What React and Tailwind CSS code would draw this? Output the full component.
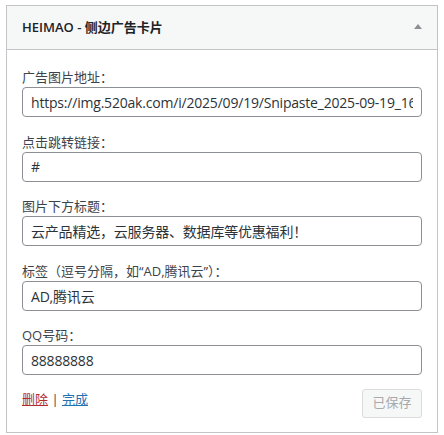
import React from "react";

const fontStack = {
  fontFamily: '"Open Sans", "Noto Sans CJK SC", sans-serif',
};

const fields = [
  { label: "广告图片地址：", value: "https://img.520ak.com/i/2025/09/19/Snipaste_2025-09-19_16-46-05.png" },
  { label: "点击跳转链接：", value: "#" },
  { label: "图片下方标题：", value: "云产品精选，云服务器、数据库等优惠福利！" },
  { label: "标签（逗号分隔，如“AD,腾讯云”）：", value: "AD,腾讯云" },
  { label: "QQ号码：", value: "88888888" },
];

const Field = ({ label, value }) => (
  <div className="flex flex-col">
    <label className="text-[13px] leading-[18px] text-[#3c434a]">{label}</label>
    <input
      type="text"
      defaultValue={value}
      readOnly
      className="mt-px h-[30px] w-full rounded-[4px] border border-[#8c8f94] bg-white px-2 text-[14px] tracking-[-0.2px] text-[#2c3338] outline-none"
    />
  </div>
);

const App = () => {
  return (
    <div className="min-h-screen bg-white px-[6px] pt-[5px]" style={fontStack}>
      <div className="w-[432px] border border-[#c3c4c7] bg-white">
        {/* header */}
        <div className="flex h-[44px] items-center justify-between border-b border-[#c3c4c7] bg-[#f6f7f7] pl-[15px] pr-[15px]">
          <h3 className="text-[13px] font-semibold text-[#1d2327]">HEIMAO - 侧边广告卡片</h3>
          <svg width="8" height="5" viewBox="0 0 8 5" className="mt-[-2px]">
            <polygon points="4,0 8,5 0,5" fill="#8c8f94" />
          </svg>
        </div>

        {/* body */}
        <div className="flex flex-col gap-[15.5px] px-[15px] pb-[14px] pt-[18px]">
          {fields.map((f) => (
            <Field key={f.label} label={f.label} value={f.value} />
          ))}

          <div className="-mt-[2px] flex items-start justify-between">
            <div className="text-[13px] leading-5">
              <a href="#" className="text-[#b32d2e] underline">删除</a>
              <span className="text-[#3c434a]"> | </span>
              <a href="#" className="text-[#2271b1] underline">完成</a>
            </div>
            <button
              disabled
              className="h-[29px] w-[60px] rounded-[3px] border border-[#dcdcde] bg-[#f6f7f7] text-[13px] text-[#a7aaad]"
            >
              已保存
            </button>
          </div>
        </div>
      </div>
    </div>
  );
};

export default App;
